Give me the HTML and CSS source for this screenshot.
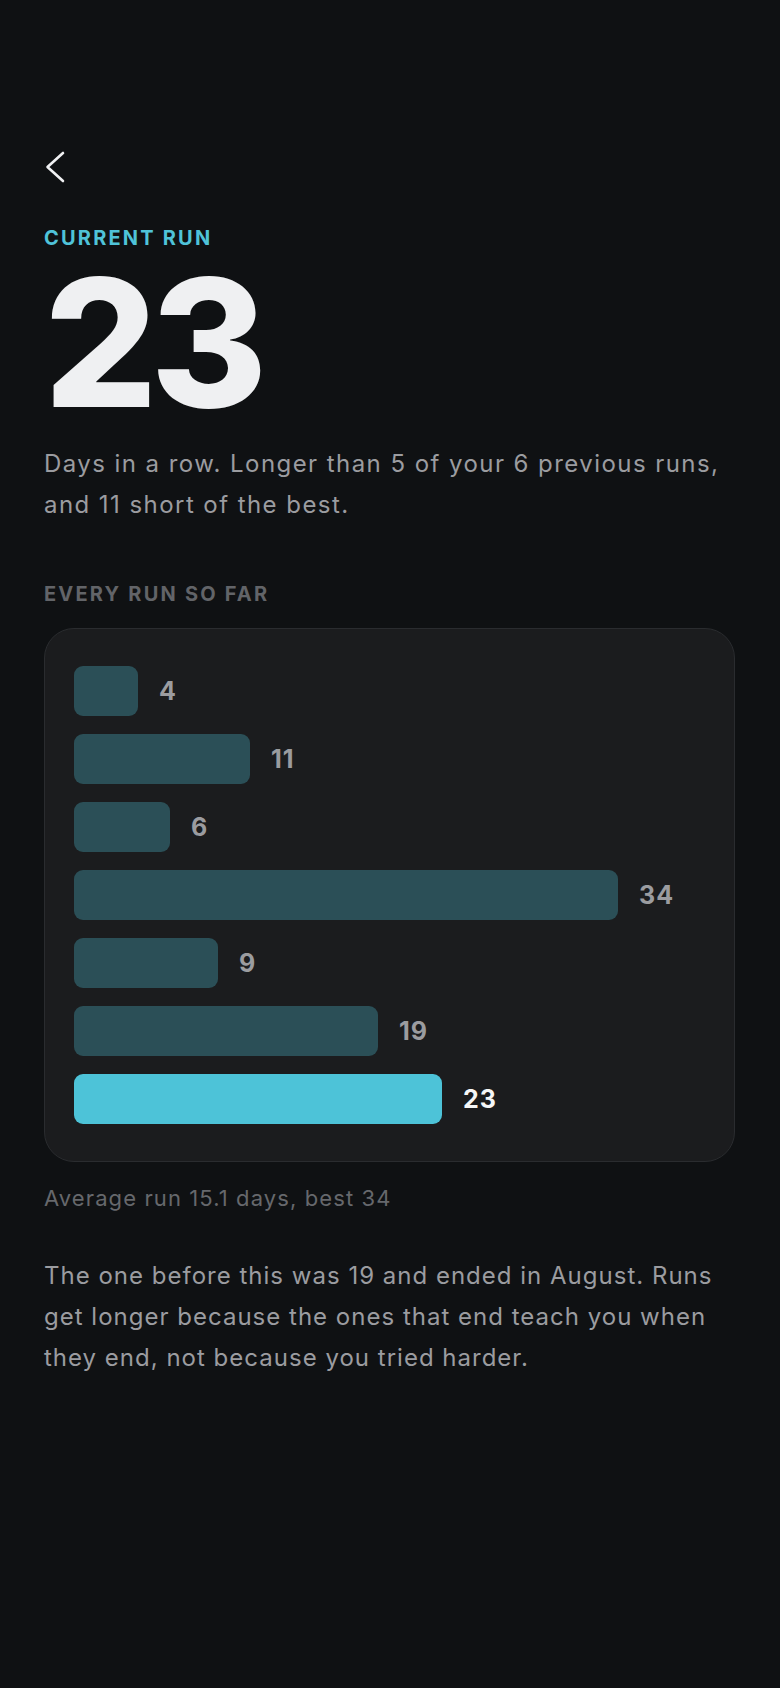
FILE: index.html
```html
<!DOCTYPE html>
<html lang="en">
<head>
<meta charset="utf-8">
<title>Current run</title>
<link rel="stylesheet" href="styles.css">
</head>
<body>
<main class="screen">
  <button class="back" aria-label="Back">
    <svg width="32" height="34" viewBox="0 0 32 34" fill="none" stroke="currentColor" stroke-width="2.6" stroke-linecap="round" stroke-linejoin="round"><path d="M19 3 L3.5 17 L19 31"/></svg>
  </button>
  <div class="eyebrow">CURRENT RUN</div>
  <div class="big">23</div>
  <p class="lede">Days in a row. Longer than 5 of your 6 previous runs, and 11 short of the best.</p>

  <div class="section-label">EVERY RUN SO FAR</div>
  <div class="card">
    <div class="row"><div class="bar" style="width:64px"></div><span class="val">4</span></div>
    <div class="row"><div class="bar" style="width:176px"></div><span class="val">11</span></div>
    <div class="row"><div class="bar" style="width:96px"></div><span class="val">6</span></div>
    <div class="row"><div class="bar" style="width:544px"></div><span class="val">34</span></div>
    <div class="row"><div class="bar" style="width:144px"></div><span class="val">9</span></div>
    <div class="row"><div class="bar" style="width:304px"></div><span class="val">19</span></div>
    <div class="row current"><div class="bar" style="width:368px"></div><span class="val">23</span></div>
  </div>
  <div class="meta">Average run 15.1 days, best 34</div>
  <p class="note">The one before this was 19 and ended in August. Runs get longer because the ones that end teach you when they end, not because you tried harder.</p>
</main>
</body>
</html>
```

FILE: styles.css
```css
* { box-sizing: border-box; }
html, body { margin: 0; padding: 0; }
body {
  background: #0f1113;
  font-family: Inter, "Noto Sans", "Liberation Sans", sans-serif;
  color: #9b9ca0;
  min-height: 1688px;
}
.screen {
  padding: 150px 45px 0 44px;
}
.back {
  display: block;
  padding: 0;
  margin: 0;
  border: 0;
  background: none;
  color: #f0f1f3;
  width: 32px;
  height: 34px;
}
.back svg { display: block; }
.eyebrow {
  margin-top: 42px;
  font-size: 20px;
  line-height: 24px;
  font-weight: 700;
  letter-spacing: 0.11em;
  color: #4fc3d9;
}
.big {
  margin-top: 1px;
  font-size: 178px;
  line-height: 184px;
  font-weight: 800;
  letter-spacing: -0.04em;
  color: #eff0f2;
}
.lede {
  margin: 8px 0 0;
  font-size: 24px;
  line-height: 41px;
  letter-spacing: 0.06em;
  color: #9b9ca0;
}
.section-label {
  margin-top: 57px;
  font-size: 20px;
  line-height: 24px;
  font-weight: 700;
  letter-spacing: 0.11em;
  color: #626468;
}
.card {
  margin-top: 22px;
  background: #1b1c1e;
  border: 1px solid #2a2c2f;
  border-radius: 30px;
  padding: 37px 29px;
  display: flex;
  flex-direction: column;
  gap: 18px;
}
.row {
  display: flex;
  align-items: center;
  gap: 21px;
  height: 50px;
}
.bar {
  height: 50px;
  border-radius: 9px;
  background: #2b4f57;
  flex: none;
}
.val {
  font-size: 25px;
  font-weight: 700;
  letter-spacing: 0.04em;
  color: #9b9ca0;
}
.row.current .bar { background: #4dc3d8; }
.row.current .val { color: #f5f6f7; }
.meta {
  margin-top: 21px;
  font-size: 22px;
  line-height: 30px;
  letter-spacing: 0.05em;
  color: #66686c;
}
.note {
  margin: 42px 0 0;
  font-size: 24px;
  line-height: 41px;
  letter-spacing: 0.042em;
  color: #9b9ca0;
}
```
